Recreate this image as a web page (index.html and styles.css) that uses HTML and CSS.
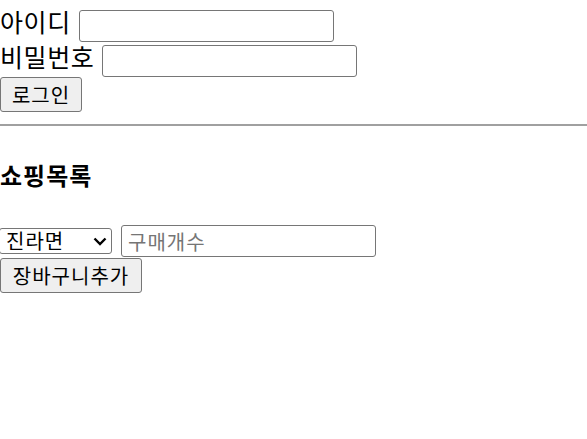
FILE: index.html
```html
<!DOCTYPE html>
<html lang="ko">
<head>
<meta charset="utf-8">
<link rel="stylesheet" href="styles.css">
</head>
<body>
<div class="login">
  <div class="row row-id"><span class="label">아이디</span><input class="field" type="text"></div>
  <div class="row row-pw"><span class="label">비밀번호</span><input class="field" type="password"></div>
  <button class="btn btn-login">로그인</button>
</div>
<hr class="divider">
<h3 class="title">쇼핑목록</h3>
<div class="shop">
  <div class="row row-shop">
    <div class="pick-wrap">
      <select class="pick"><option>진라면</option><option>신라면</option></select>
      <svg class="chev" width="14" height="9" viewBox="0 0 14 9"><path d="M1.5 1.5 L7 7 L12.5 1.5" fill="none" stroke="#000" stroke-width="2.4"/></svg>
    </div>
    <input class="field field-qty" type="text" placeholder="구매개수">
  </div>
  <button class="btn btn-add">장바구니추가</button>
</div>
</body>
</html>
```
FILE: styles.css
```css
html, body {
  margin: 0;
  padding: 0;
  background: #fff;
}
body {
  font-family: "Noto Sans CJK KR", "Noto Sans", sans-serif;
  font-size: 25px;
  color: #000;
}
.row {
  display: flex;
  align-items: flex-start;
  gap: 8px;
}
.label {
  line-height: 25px;
  letter-spacing: 0.6px;
}
.row-id { height: 45px; }
.row-id .label { padding-top: 9px; }
.row-id .field { margin-top: 10px; }
.row-pw { height: 32px; }
.row-pw .label { padding-top: 0; margin-top: -1px; }
.field {
  box-sizing: border-box;
  width: 255px;
  height: 32px;
  border: 1px solid #767676;
  border-radius: 3px;
  font-family: inherit;
  font-size: 20px;
  padding: 0 6px;
  margin: 0;
  background: #fff;
}
.field::placeholder { color: #757575; letter-spacing: 1px; }
.btn {
  display: block;
  box-sizing: border-box;
  margin: 0;
  height: 35px;
  padding: 0 9px;
  font-family: inherit;
  font-size: 20px;
  line-height: 1;
  letter-spacing: 1px;
  color: #000;
  background: #efefef;
  border: 1px solid #767676;
  border-radius: 3px;
}
.btn-login { width: 82px; }
.divider {
  margin: 12px 0 0;
  border: 0;
  border-top: 2px solid #a0a0a0;
  height: 0;
}
.title {
  margin: 33px 0 0;
  font-size: 24px;
  font-weight: bold;
  line-height: 32px;
  letter-spacing: 1px;
}
.shop { margin-top: 34px; }
.row-shop { align-items: center; gap: 8px; height: 32px; }
.pick-wrap {
  position: relative;
  width: 113px;
  height: 26px;
}
.pick {
  -webkit-appearance: none;
  appearance: none;
  box-sizing: border-box;
  display: block;
  width: 113px;
  height: 26px;
  margin: 0 0 0 -1px;
  font-family: inherit;
  font-size: 20px;
  line-height: 24px;
  letter-spacing: 1px;
  padding: 0 0 0 6px;
  border: 1px solid #767676;
  border-radius: 3px;
  background: #fff;
  color: #000;
}
.chev {
  position: absolute;
  right: 6px;
  top: 9px;
  pointer-events: none;
}
.btn-add { width: 142px; height: 35px; margin-top: 1px; }
```
